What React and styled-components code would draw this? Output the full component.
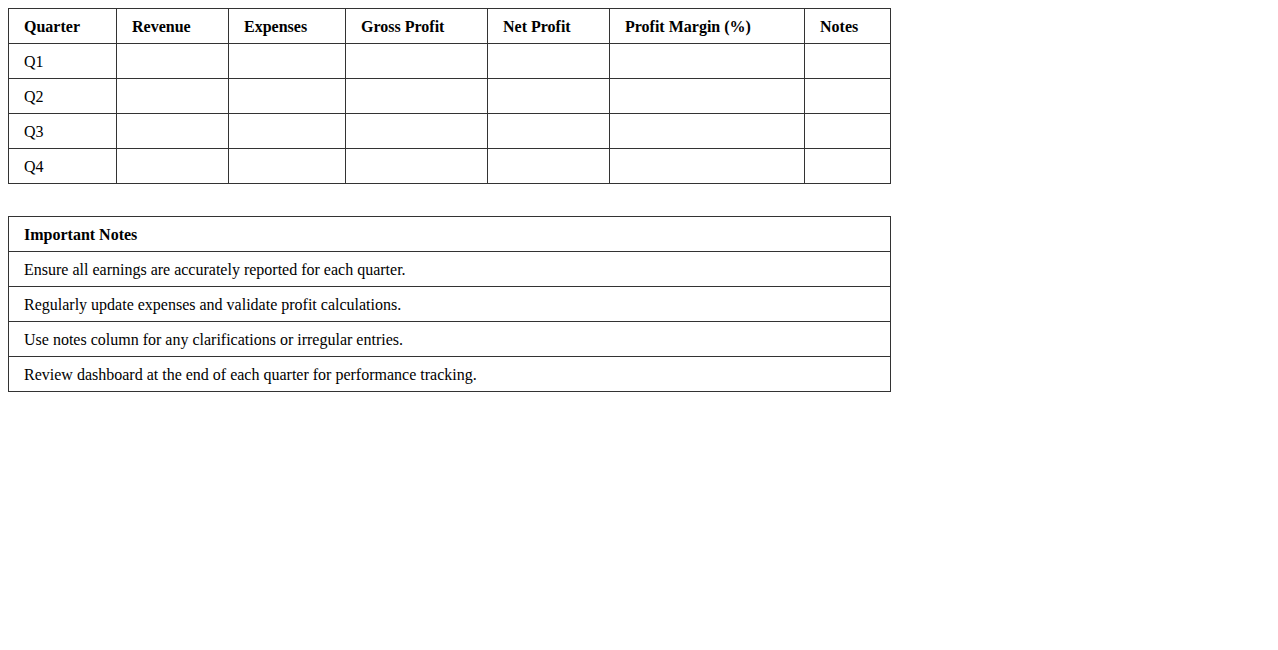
import styled, { createGlobalStyle } from "styled-components";

const GlobalStyle = createGlobalStyle`
  body {
    margin: 8px;
    font-family: "Liberation Serif", "Times New Roman", serif;
    font-size: 16px;
    color: #000;
    background: #fff;
  }
`;

const Table = styled.table`
  width: ${(p) => p.$width}px;
  border-collapse: collapse;
  table-layout: fixed;
  margin-bottom: ${(p) => p.$gap || 0}px;
`;

const Th = styled.th`
  box-sizing: border-box;
  border: 1px solid #333;
  padding: 2px 15px 0;
  height: 35px;
  text-align: left;
  font-weight: bold;
  width: ${(p) => (p.$w ? p.$w + "px" : "auto")};
`;

const Td = styled.td`
  box-sizing: border-box;
  border: 1px solid #333;
  padding: 2px 15px 0;
  height: 35px;
  text-align: left;
`;

const columns = [
  ["Quarter", 108],
  ["Revenue", 112],
  ["Expenses", 117],
  ["Gross Profit", 142],
  ["Net Profit", 122],
  ["Profit Margin (%)", 195],
  ["Notes", 86],
];

const quarters = ["Q1", "Q2", "Q3", "Q4"];

const notes = [
  "Ensure all earnings are accurately reported for each quarter.",
  "Regularly update expenses and validate profit calculations.",
  "Use notes column for any clarifications or irregular entries.",
  "Review dashboard at the end of each quarter for performance tracking.",
];

export default function App() {
  return (
    <>
      <GlobalStyle />
      <Table $width={882} $gap={32}>
        <thead>
          <tr>
            {columns.map(([name, w]) => (
              <Th key={name} $w={w}>{name}</Th>
            ))}
          </tr>
        </thead>
        <tbody>
          {quarters.map((q) => (
            <tr key={q}>
              <Td>{q}</Td>
              {columns.slice(1).map(([name]) => (
                <Td key={name}></Td>
              ))}
            </tr>
          ))}
        </tbody>
      </Table>
      <Table $width={883}>
        <thead>
          <tr>
            <Th>Important Notes</Th>
          </tr>
        </thead>
        <tbody>
          {notes.map((n) => (
            <tr key={n}>
              <Td>{n}</Td>
            </tr>
          ))}
        </tbody>
      </Table>
    </>
  );
}
